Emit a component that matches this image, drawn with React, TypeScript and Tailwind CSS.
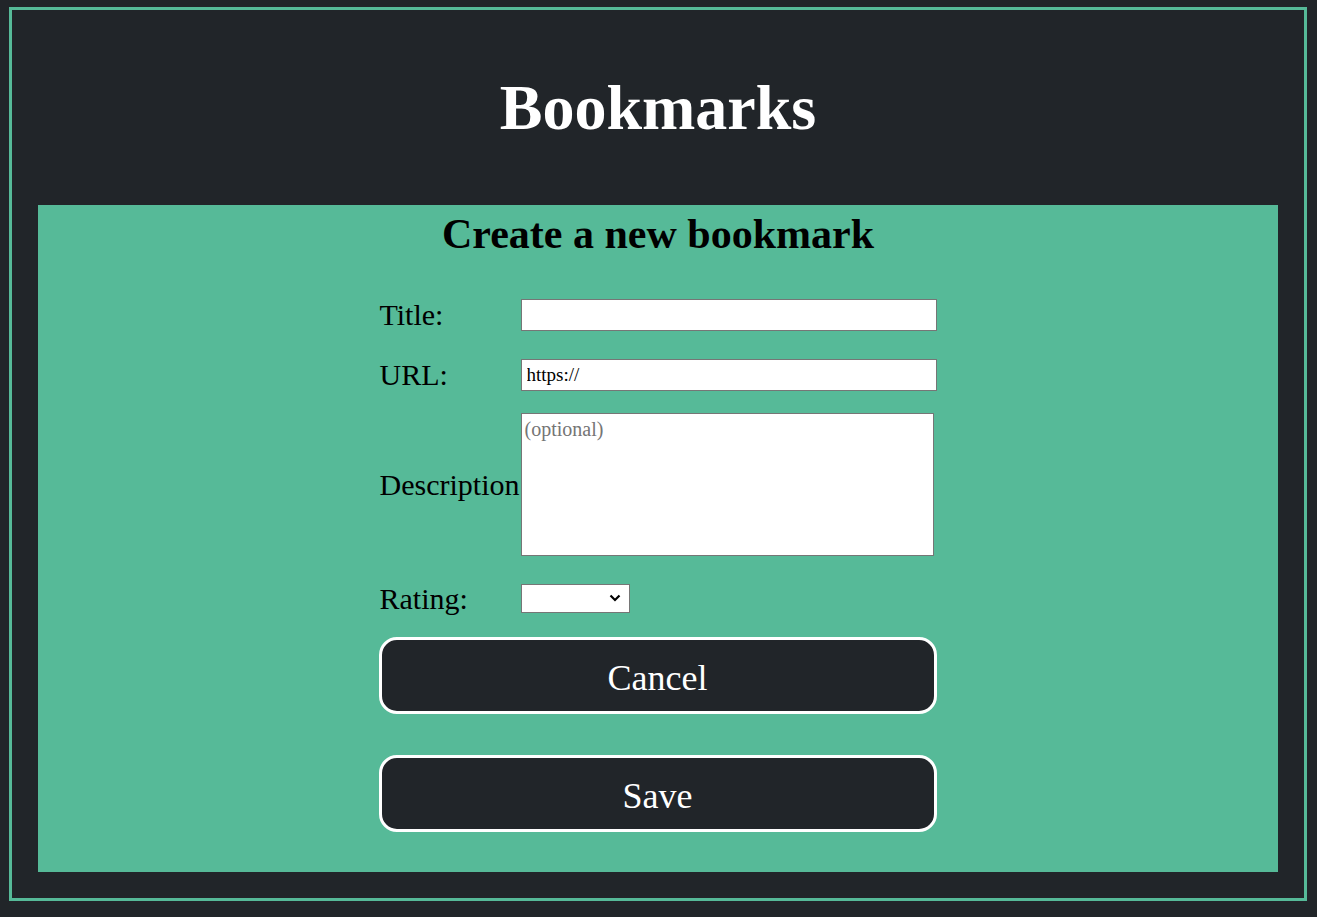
import React from 'react';

const serif = "font-['Liberation_Serif',_'DejaVu_Serif',_serif]";

interface IRowProps {
    label: string;
    children: React.ReactNode;
    className?: string;
}

const Row = ({ label, children, className }: IRowProps) => {
    return (
        <div className={`flex items-center ${className ?? ''}`}>
            <label className="w-[141px] shrink-0 text-[30px] leading-[28px] text-black whitespace-nowrap">{label}</label>
            {children}
        </div>
    );
};

const App = () => {
    return (
        <div className={`min-h-screen bg-[#212529] pl-[9px] pr-[10px] pt-[7px] pb-[16px] ${serif}`}>
            <div className="border-[3px] border-[#56ba98] px-[26px] pb-[26px]">
                <header className="h-[195px] flex items-center justify-center">
                    <h1 className="text-[64px] font-bold text-white leading-none">Bookmarks</h1>
                </header>
                <main className="bg-[#56ba98] flex flex-col items-center pb-[40px]">
                    <h2 className="h-[60px] leading-[58px] text-[42px] font-bold text-black">Create a new bookmark</h2>
                    <form className="w-[557px] mt-[34px] flex flex-col" onSubmit={(e) => e.preventDefault()}>
                        <Row label="Title:">
                            <input
                                type="text"
                                className="w-[416px] h-[32px] bg-white border border-[#767676] px-1 text-[18px] outline-none"
                            />
                        </Row>
                        <Row label="URL:" className="mt-[28px]">
                            <input
                                type="text"
                                defaultValue="https://"
                                className="w-[416px] h-[32px] bg-white border border-[#767676] px-[5px] text-[19px] text-black outline-none"
                            />
                        </Row>
                        <Row label="Description" className="mt-[22px]">
                            <textarea
                                placeholder="(optional)"
                                className="w-[413px] h-[143px] bg-white border border-[#767676] px-[3px] py-[2px] text-[20px] leading-[26px] resize-none outline-none placeholder:text-[#757575]"
                            />
                        </Row>
                        <Row label="Rating:" className="mt-[28px]">
                            <div className="relative w-[109px] h-[29px]">
                                <select className="w-full h-full appearance-none bg-white border border-[#767676] text-[16px] outline-none">
                                    <option value=""></option>
                                    <option value="1">1</option>
                                    <option value="2">2</option>
                                    <option value="3">3</option>
                                    <option value="4">4</option>
                                    <option value="5">5</option>
                                </select>
                                <svg
                                    className="absolute right-[9px] top-[10px] pointer-events-none"
                                    width="12"
                                    height="8"
                                    viewBox="0 0 12 8"
                                    fill="none"
                                >
                                    <path d="M1.5 1.5 L6 6 L10.5 1.5" stroke="#000" strokeWidth="2.2" />
                                </svg>
                            </div>
                        </Row>
                        <button
                            type="button"
                            className="mt-[24px] h-[77px] w-[558px] -ml-px pt-[5px] bg-[#212529] border-[3px] border-white rounded-[18px] text-white text-[36px]"
                        >
                            Cancel
                        </button>
                        <button
                            type="submit"
                            className="mt-[41px] h-[77px] w-[558px] -ml-px pt-[5px] bg-[#212529] border-[3px] border-white rounded-[18px] text-white text-[36px]"
                        >
                            Save
                        </button>
                    </form>
                </main>
            </div>
        </div>
    );
};

export default App;
